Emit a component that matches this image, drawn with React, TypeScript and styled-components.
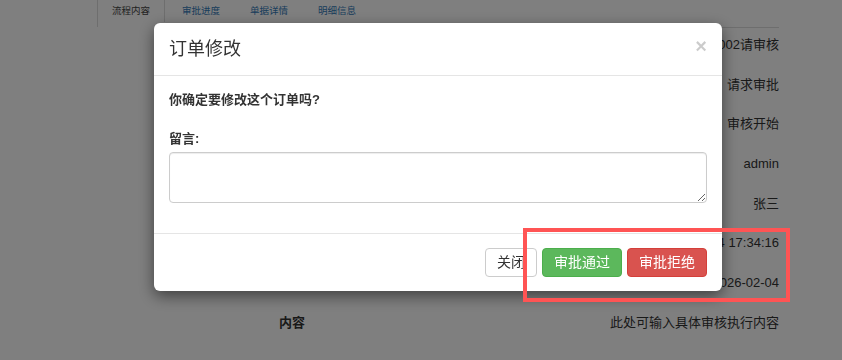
import React from 'react';
import styled, {createGlobalStyle} from 'styled-components';

const GlobalStyle = createGlobalStyle`
  html, body {
    margin: 0;
    padding: 0;
    background: white;
    font-family: "Liberation Sans", "Noto Sans CJK SC", sans-serif;
    color: #333;
  }
  * {
    box-sizing: border-box;
  }
`;

const Page = styled.div`
  width: 842px;
  height: 360px;
  overflow: hidden;
  padding-left: 97px;
`;

const TabBar = styled.div`
  display: flex;
  height: 27px;
  border-left: 1px solid #ddd;
`;

const Tab = styled.div<{ active?: boolean }>`
  height: 22px;
  line-height: 22px;
  padding: 0 ${p => p.active ? '14px' : '15px'};
  font-size: 9.5px;
  color: ${p => p.active ? '#444' : '#337ab7'};
  border-right: ${p => p.active ? '1px solid #ddd' : 'none'};
  margin-right: ${p => p.active ? '2px' : '0'};
  white-space: nowrap;
`;

const Table = styled.div`
  margin-left: 103px;
  width: 579px;
  border-top: 1px solid #ddd;
  display: grid;
  grid-template-columns: 184px 1fr;
  grid-auto-rows: 39.7px;
`;

const Label = styled.div`
  padding-top: 7px;
  line-height: 20px;
  font-size: 13px;
  font-weight: bold;
  text-align: center;
`;

const Value = styled.div`
  padding-top: 7px;
  line-height: 20px;
  font-size: 13px;
  text-align: right;
  white-space: nowrap;
`;

const Backdrop = styled.div`
  position: fixed;
  inset: 0;
  background: rgba(0, 0, 0, 0.5);
`;

const Modal = styled.div`
  position: fixed;
  left: 154px;
  top: 23px;
  width: 568px;
  background: white;
  border-radius: 6px;
  box-shadow: 0 5px 15px rgba(0, 0, 0, 0.5);
`;

const ModalHeader = styled.div`
  display: flex;
  align-items: center;
  justify-content: space-between;
  padding: 15px;
  border-bottom: 1px solid #e5e5e5;
`;

const Title = styled.h4`
  margin: 0;
  font-size: 18px;
  line-height: 22px;
  font-weight: normal;
  color: #333;
`;

const Close = styled.span`
  font-size: 20px;
  font-weight: bold;
  line-height: 20px;
  color: #000;
  opacity: 0.2;
  margin-top: -6px;
`;

const ModalBody = styled.div`
  padding: 15px 15px 30px;
`;

const Question = styled.p`
  margin: 0 0 21px;
  font-size: 13px;
  line-height: 18px;
  font-weight: bold;
`;

const FieldLabel = styled.label`
  display: block;
  margin-bottom: 4px;
  font-size: 13px;
  line-height: 18px;
  font-weight: bold;
`;

const TextArea = styled.textarea`
  display: block;
  width: 100%;
  height: 51px;
  border: 1px solid #ccc;
  border-radius: 4px;
  box-shadow: inset 0 1px 1px rgba(0, 0, 0, 0.075);
  font-family: inherit;
  font-size: 13px;
  padding: 6px 12px;
`;

const ModalFooter = styled.div`
  display: flex;
  justify-content: flex-end;
  gap: 5px;
  padding: 14px 15px 14px;
  border-top: 1px solid #e5e5e5;
`;

const Button = styled.button<{ kind?: 'default' | 'success' | 'danger' }>`
  height: 29px;
  padding: 0 11px;
  font-family: inherit;
  font-size: 14px;
  line-height: 27px;
  border-radius: 4px;
  border: 1px solid ${p => p.kind === 'success' ? '#4cae4c' : p.kind === 'danger' ? '#d43f3a' : '#ccc'};
  background: ${p => p.kind === 'success' ? '#5cb85c' : p.kind === 'danger' ? '#d9534f' : '#fff'};
  color: ${p => p.kind === 'success' || p.kind === 'danger' ? '#fff' : '#333'};
`;

const Highlight = styled.div`
  position: fixed;
  left: 523px;
  top: 228px;
  width: 267px;
  height: 74px;
  border: 4px solid #ff5454;
`;

const rows: [string, string][] = [
  ['审核标题', '2002请审核'],
  ['审核类型', '请求审批'],
  ['审核状态', '审核开始'],
  ['申请人', 'admin'],
  ['审核人', '张三'],
  ['申请时间', '2026-02-04 17:34:16'],
  ['截止日期', '2026-02-04'],
  ['内容', '此处可输入具体审核执行内容'],
];

function App() {
  return (
    <>
      <GlobalStyle/>
      <Page>
        <TabBar>
          <Tab active>流程内容</Tab>
          <Tab>审批进度</Tab>
          <Tab>单据详情</Tab>
          <Tab>明细信息</Tab>
        </TabBar>
        <Table>
          {rows.map(([label, value]) =>
            <React.Fragment key={label}>
              <Label>{label}</Label>
              <Value>{value}</Value>
            </React.Fragment>
          )}
        </Table>
      </Page>
      <Backdrop/>
      <Modal>
        <ModalHeader>
          <Title>订单修改</Title>
          <Close>×</Close>
        </ModalHeader>
        <ModalBody>
          <Question>你确定要修改这个订单吗?</Question>
          <FieldLabel>留言:</FieldLabel>
          <TextArea/>
        </ModalBody>
        <ModalFooter>
          <Button>关闭</Button>
          <Button kind="success">审批通过</Button>
          <Button kind="danger">审批拒绝</Button>
        </ModalFooter>
      </Modal>
      <Highlight/>
    </>
  );
}

export default App;
